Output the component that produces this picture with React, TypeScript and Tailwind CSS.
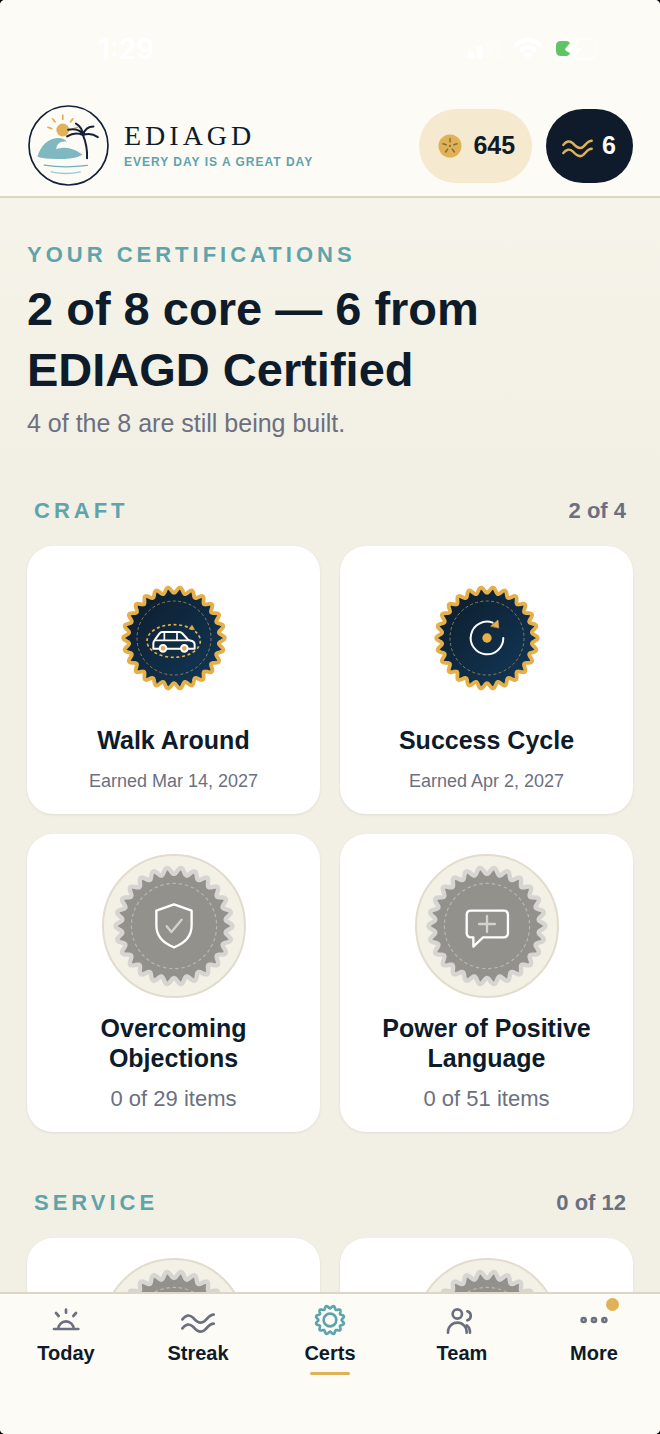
import type { ReactNode } from 'react'

type BadgeIcon = 'car' | 'cycle' | 'shield' | 'bubble' | 'none'

interface Cert {
  title: string
  icon: BadgeIcon
  earned?: string
  progress?: string
}

interface Section {
  name: string
  count: string
  certs: Cert[]
}

const sections: Section[] = [
  {
    name: 'CRAFT',
    count: '2 of 4',
    certs: [
      { title: 'Walk Around', icon: 'car', earned: 'Earned Mar 14, 2027' },
      { title: 'Success Cycle', icon: 'cycle', earned: 'Earned Apr 2, 2027' },
      { title: 'Overcoming Objections', icon: 'shield', progress: '0 of 29 items' },
      { title: 'Power of Positive Language', icon: 'bubble', progress: '0 of 51 items' },
    ],
  },
  {
    name: 'SERVICE',
    count: '0 of 12',
    certs: [
      { title: '', icon: 'none' },
      { title: '', icon: 'none' },
    ],
  },
]

// Wavy edge of a seal: `points` crests around a circle of radius `mid`
function wavyPath(points: number, mid: number, amp: number) {
  const steps = points * 16
  let d = ''
  for (let i = 0; i < steps; i++) {
    const a = (i / steps) * Math.PI * 2
    const r = mid + amp * Math.cos(points * a)
    d += `${i === 0 ? 'M' : 'L'}${(r * Math.cos(a)).toFixed(2)} ${(r * Math.sin(a)).toFixed(2)}`
  }
  return d + 'Z'
}

const sealPath = wavyPath(26, 48, 2.8)
const gearPath = wavyPath(12, 39, 4)

function SealGlyph({ icon }: { icon: BadgeIcon }) {
  if (icon === 'car') {
    return (
      <g transform="scale(.333)" fill="none" strokeLinecap="round" strokeLinejoin="round">
        <ellipse cx="-1" cy="9" rx="80" ry="49" stroke="#e5b04a" strokeWidth="5" strokeDasharray="9 8" strokeLinecap="butt" />
        <path d="M46-28L54-38L61-26Z" fill="#e5b04a" stroke="#e5b04a" strokeWidth="2" />
        <path d="M-62 32V16Q-62 9-57 5L-44-13Q-41-18-35-18H14Q20-18 24-15L43 6L54 9Q62 12 62 20V32Z" stroke="#fff" strokeWidth="6" />
        <path d="M-56 7H44M-29-17V7M9-17V7" stroke="#fff" strokeWidth="5" />
        <circle cx="-33" cy="31" r="10" fill="#e5a85a" stroke="#fff" strokeWidth="6" />
        <circle cx="31" cy="31" r="10" fill="#e5a85a" stroke="#fff" strokeWidth="6" />
      </g>
    )
  }
  if (icon === 'cycle') {
    return (
      <g transform="scale(.333)" fill="none" strokeLinecap="round">
        <path d="M49 0A49 49 0 1 1 17-46" stroke="#fff" strokeWidth="6" />
        <path d="M12-36L33-54L35-31Z" fill="#e5b04a" stroke="#e5b04a" strokeWidth="2" strokeLinejoin="round" />
        <circle r="14" fill="#e5b04a" />
      </g>
    )
  }
  if (icon === 'shield') {
    return (
      <g transform="scale(.289)" fill="none" strokeLinecap="round" strokeLinejoin="round" strokeWidth="7">
        <path d="M0-65L53-46V-2C53 32 30 53 0 64C-30 53-53 32-53-2V-46Z" stroke="#fff" />
        <path d="M-22 1L-8 18L23-19" stroke="#d3d2ce" />
      </g>
    )
  }
  if (icon === 'bubble') {
    return (
      <g transform="scale(.289)" fill="none" strokeLinecap="round" strokeLinejoin="round" strokeWidth="7">
        <path d="M-48-46H50Q63-46 63-33V21Q63 34 50 34H-12L-41 62V34H-48Q-61 34-61 21V-33Q-61-46-48-46Z" stroke="#fff" />
        <path d="M0-30V18M-24-6H24" stroke="#d3d2ce" />
      </g>
    )
  }
  return null
}

function Seal({ icon, locked }: { icon: BadgeIcon; locked: boolean }) {
  return (
    <svg viewBox="-53 -53 106 106" className={locked ? 'size-[122px]' : 'size-[106px]'} aria-hidden="true">
      <defs>
        <linearGradient id="navy" x1="0" y1="0" x2="1" y2="1">
          <stop offset="0" stopColor="#0d1b2a" />
          <stop offset="1" stopColor="#12395a" />
        </linearGradient>
      </defs>
      <path d={sealPath} fill={locked ? '#92918b' : 'url(#navy)'} stroke={locked ? '#d6d5d1' : '#e5b04a'} strokeWidth="3.8" strokeLinejoin="round" />
      <circle r="37" fill="none" stroke={locked ? '#b9b8b2' : '#8c7f52'} strokeWidth="1" strokeDasharray="3 2.4" />
      <SealGlyph icon={icon} />
    </svg>
  )
}

function Logo() {
  return (
    <svg viewBox="0 0 240 240" className="size-[81px] shrink-0" fill="none" strokeLinecap="round" role="img" aria-label="EDIAGD">
      <circle cx="120" cy="120" r="117" stroke="#14213a" strokeWidth="5" />
      <g stroke="#e0b055" strokeWidth="5">
        <path d="M103 30V42M73 41L80 50M59 66L70 70M133 41L126 50M147 66L136 70" />
      </g>
      <circle cx="103" cy="74" r="19" fill="#e0b257" />
      <path d="M28 153C37 121 60 99 88 98C101 98 112 103 114 109C99 106 84 114 84 131C110 120 141 130 161 147C143 160 112 161 84 160C60 159 42 158 28 153Z" fill="#80b8c2" />
      <path d="M48 178C85 184 137 184 176 179" stroke="#6fb1b7" strokeWidth="4" />
      <path d="M69 198C95 204 130 204 155 198" stroke="#9bcbd0" strokeWidth="4" />
      <g stroke="#14213a" strokeWidth="6">
        <path d="M163 89C171 108 176 134 175 158" />
        <path d="M163 89C154 70 137 70 119 73M163 89C146 81 130 84 116 93M163 89C161 71 153 61 142 55M163 89C168 72 180 64 194 64M163 89C180 83 195 87 207 95" />
      </g>
    </svg>
  )
}

function WavePaths() {
  return (
    <>
      <path d="M1 46C10 34 22 30 33 41C44 54 55 62 67 52C78 42 83 32 95 32" />
      <path d="M1 73C10 61 22 57 33 68C44 81 55 89 67 79C78 69 83 59 95 59" />
    </>
  )
}

function StatusBar() {
  return (
    <div className="flex h-[98px] items-center justify-between pr-[60px] pl-[98px] text-white">
      <span className="font-['Inter','Liberation_Sans',sans-serif] text-[28px] font-semibold">1:29</span>
      <div className="flex items-center gap-3">
        <svg viewBox="0 0 34 22" className="h-[22px] w-[34px]" fill="currentColor" aria-hidden="true">
          <rect x="0" y="13" width="6" height="8" rx="1.5" />
          <rect x="9" y="8" width="6" height="13" rx="1.5" />
          <rect x="18" y="4" width="6" height="17" rx="1.5" opacity=".4" />
          <rect x="27" y="0" width="6" height="21" rx="1.5" opacity=".4" />
        </svg>
        <svg viewBox="0 0 28 22" className="h-[22px] w-[28px]" fill="none" stroke="currentColor" strokeWidth="4" aria-hidden="true">
          <path d="M1 8Q14-4 27 8M6 13Q14 6 22 13" />
          <path d="M14 21L10 17Q14 13 18 17Z" fill="currentColor" stroke="none" />
        </svg>
        <svg viewBox="0 0 46 22" className="h-[22px] w-[46px]" aria-hidden="true">
          <rect x="1" y="1" width="41" height="20" rx="6" fill="none" stroke="#fff" strokeOpacity=".6" strokeWidth="2" />
          <path d="M7 3H12Q15 3 16 5L11 11Q11 13 16 15Q15 18 12 18H7Q2 18 2 13V8Q2 3 7 3Z" fill="#5fc466" />
          <path d="M25 1L12 12H20L17 21L29 10H22Z" fill="#fff" />
        </svg>
      </div>
    </div>
  )
}

function Header() {
  return (
    <header className="shrink-0 border-b-2 border-[#ddd6c5] bg-[#fcfbf5]">
      <StatusBar />
      <div className="flex items-center justify-between pt-[7px] pr-[27px] pb-2.5 pl-7">
        <div className="flex items-center gap-[15px]">
          <Logo />
          <div>
            <div className="font-['Liberation_Serif',serif] text-[28px] leading-8 tracking-[4px]">EDIAGD</div>
            <div className="text-[12px] leading-5 font-bold tracking-[1px] text-[#5fa3ab]">EVERY DAY IS A GREAT DAY</div>
          </div>
        </div>
        <div className="flex gap-3.5">
          <button className="flex h-[74px] items-center gap-[11px] rounded-full bg-[#f5e9cf] pr-[17px] pl-[19px] text-[25px] font-bold">
            <svg viewBox="-12 -12 24 24" className="size-6" aria-hidden="true">
              <circle r="11.5" fill="#e0b257" />
              <g stroke="#8a6d35" strokeWidth="1.5" strokeLinecap="round">
                <path d="M0-7.500V-4M7.100-2.300L3.800-1.200M4.400 6L2.400 3.200M-4.400 6L-2.400 3.200M-7.100-2.300L-3.800-1.200" />
                <circle r=".4" fill="#8a6d35" />
              </g>
            </svg>
            645
          </button>
          <button className="flex h-[74px] items-center gap-[10px] rounded-full bg-[#0f1b2b] px-[17px] text-[25px] font-bold text-[#fcfbf5]">
            <svg viewBox="0 0 96 96" className="size-[29px] overflow-visible text-[#e0b257]" fill="none" stroke="currentColor" strokeWidth="8" strokeLinecap="round" aria-hidden="true">
              <WavePaths />
            </svg>
            6
          </button>
        </div>
      </div>
    </header>
  )
}

function CertCard({ cert }: { cert: Cert }) {
  const locked = !cert.earned
  return (
    <a href="#cert" className="flex min-h-[268px] flex-col items-center rounded-[26px] bg-white px-5 pt-5 pb-[17px] text-center shadow-[0_1px_3px_rgba(15,27,43,0.08)]">
      <div className={`flex size-36 items-center justify-center rounded-full ${locked ? 'border-2 border-[#e2dccd] bg-[#f3f0e5]' : ''}`}>
        <Seal icon={cert.icon} locked={locked} />
      </div>
      <h3 className="mt-[15px] text-[25px] leading-[30px] font-bold">{cert.title}</h3>
      {cert.earned ? (
        <p className="mt-2.5 text-[18px] leading-8 text-[#6b7080]">{cert.earned}</p>
      ) : (
        <p className="mt-2.5 text-[22px] leading-8 text-[#6b7080]">{cert.progress}</p>
      )}
    </a>
  )
}

function NavItem({ label, active, dot, children }: { label: string; active?: boolean; dot?: boolean; children: ReactNode }) {
  return (
    <a href="#nav" className="relative flex flex-1 flex-col items-center pt-2.5">
      <svg viewBox="0 0 96 96" className={`size-8 overflow-visible ${active ? 'text-[#5fa3ab]' : 'text-[#6b7080]'}`} fill="none" stroke="currentColor" strokeWidth="8" strokeLinecap="round" strokeLinejoin="round" aria-hidden="true">
        {children}
      </svg>
      <span className="mt-[3px] text-[20px] leading-7 font-bold">{label}</span>
      {active && <span className="mt-[5px] h-[3px] w-10 rounded-full bg-[#e0b257]" />}
      {dot && <span className="absolute top-1 left-1/2 ml-3 size-[13px] rounded-full bg-[#e0b257]" />}
    </a>
  )
}

function BottomNav() {
  return (
    <nav className="flex h-[142px] shrink-0 border-t-2 border-[#ddd6c5] bg-[#fcfbf5]">
      <NavItem label="Today">
        <path d="M12 75H85M25 75A23 23 0 0 1 71 75M48 17V26M18 27L26 36M78 27L70 36" />
      </NavItem>
      <NavItem label="Streak">
        <WavePaths />
      </NavItem>
      <NavItem label="Certs" active>
        <path d={gearPath} transform="translate(48 48) rotate(15)" />
        <circle cx="48" cy="48" r="19" />
      </NavItem>
      <NavItem label="Team">
        <circle cx="34" cy="30" r="14" />
        <path d="M6 86V84A28 28 0 0 1 62 84V86M64 22A14 14 0 0 1 64 49M62 64Q72 70 72 86" />
      </NavItem>
      <NavItem label="More" dot>
        <circle cx="17" cy="48" r="6" />
        <circle cx="48" cy="48" r="6" />
        <circle cx="79" cy="48" r="6" />
      </NavItem>
    </nav>
  )
}

export default function App() {
  return (
    <div className="h-screen bg-black font-['Liberation_Sans',Arial,sans-serif] text-[#0d1b2a]">
      <div className="flex h-full flex-col overflow-hidden rounded-[5px] bg-[#f2efe4]">
        <Header />
        <main className="min-h-0 flex-1 overflow-hidden bg-linear-to-b from-[#f6f4ea] to-[#f2efe4] to-25% px-[27px] pt-[42px]">
          <p className="text-[22px] leading-[30px] font-bold tracking-[4px] text-[#5fa3ab]">YOUR CERTIFICATIONS</p>
          <h1 className="mt-2 text-[47px] leading-[61px] font-bold">2 of 8 core — 6 from EDIAGD Certified</h1>
          <p className="mt-[7px] text-[25px] leading-8 text-[#6b7080]">4 of the 8 are still being built.</p>
          <div className="mt-14 flex flex-col gap-[55px]">
            {sections.map((section) => (
              <section key={section.name}>
                <div className="flex items-center justify-between px-[7px] font-bold">
                  <h2 className="text-[22px] leading-8 tracking-[4px] text-[#5fa3ab]">{section.name}</h2>
                  <span className="text-[22px] leading-8 text-[#6b7080]">{section.count}</span>
                </div>
                <div className="mt-[19px] grid grid-cols-2 gap-5">
                  {section.certs.map((cert, i) => (
                    <CertCard key={i} cert={cert} />
                  ))}
                </div>
              </section>
            ))}
          </div>
        </main>
        <BottomNav />
      </div>
    </div>
  )
}
